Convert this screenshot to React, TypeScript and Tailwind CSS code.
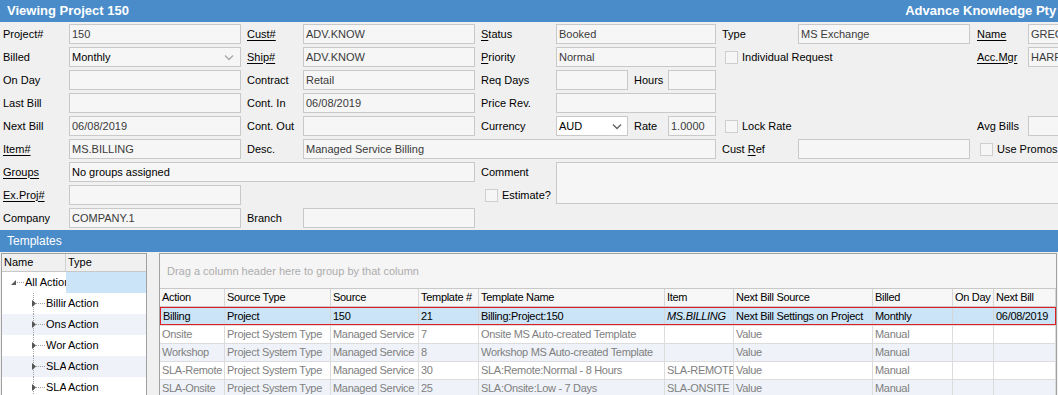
import React from 'react';

type Kids = { children?: React.ReactNode; className?: string };

const Box = ({ children, className = '' }: Kids) => (
  <div
    className={`h-[20px] border border-[#c9c9c9] bg-[#f6f6f6] pl-[2px] leading-[18px] text-[#3a3a3a] whitespace-nowrap overflow-hidden ${className}`}
  >
    {children}
  </div>
);

const Lbl = ({ children, className = '' }: Kids) => (
  <div className={`flex items-center whitespace-nowrap text-black ${className}`}>{children}</div>
);

const Chevron = ({ color = '#a8a8a8' }: { color?: string }) => (
  <svg width="10" height="7" viewBox="0 0 10 7" className="shrink-0">
    <path d="M1 1.5l4 4 4-4" fill="none" stroke={color} strokeWidth="1.3" />
  </svg>
);

const Check = ({ label, className = '' }: { label: string; className?: string }) => (
  <div className={`flex items-center gap-[4px] whitespace-nowrap ${className}`}>
    <span className="w-[13px] h-[13px] shrink-0 border border-[#cfcfcf] bg-[#f6f6f6]" />
    <span>{label}</span>
  </div>
);

const U = ({ children }: Kids) => <span className="underline underline-offset-2">{children}</span>;

const cols = [
  { name: 'Action', w: 'w-[65px]' },
  { name: 'Source Type', w: 'w-[106px]' },
  { name: 'Source', w: 'w-[88px]' },
  { name: 'Template #', w: 'w-[60px]' },
  { name: 'Template Name', w: 'w-[186px]' },
  { name: 'Item', w: 'w-[69px]' },
  { name: 'Next Bill Source', w: 'w-[139px]' },
  { name: 'Billed', w: 'w-[80px]' },
  { name: 'On Day', w: 'w-[41px]' },
  { name: 'Next Bill', w: 'w-[62px]' },
];

const rows = [
  ['Onsite', 'Project System Type', 'Managed Service', '7', 'Onsite MS Auto-created Template', '', 'Value', 'Manual', '', ''],
  ['Workshop', 'Project System Type', 'Managed Service', '8', 'Workshop MS Auto-created Template', '', 'Value', 'Manual', '', ''],
  ['SLA-Remote', 'Project System Type', 'Managed Service', '30', 'SLA:Remote:Normal - 8 Hours', 'SLA-REMOTE', 'Value', 'Manual', '', ''],
  ['SLA-Onsite', 'Project System Type', 'Managed Service', '25', 'SLA:Onsite:Low - 7 Days', 'SLA-ONSITE', 'Value', 'Manual', '', ''],
];

const selected = ['Billing', 'Project', '150', '21', 'Billing:Project:150', 'MS.BILLING', 'Next Bill Settings on Project', 'Monthly', '', '06/08/2019'];

const treeKids = ['Billing', 'Onsite', 'Workshop', 'SLA-Remote', 'SLA-Onsite'];

export default function App() {
  return (
    <div className="w-[1058px] h-[395px] overflow-hidden bg-[#f0f0f0] text-[11px] font-['Liberation_Sans',Arial,sans-serif]">
      {/* title */}
      <div className="h-[22px] bg-[#4a8cca] text-white font-bold text-[13px] flex items-center pl-[7px] overflow-hidden whitespace-nowrap">
        <span>Viewing Project 150</span>
        <span className="ml-auto mr-[-22px]">Advance Knowledge Pty Ltd</span>
      </div>

      {/* form */}
      <div className="grid grid-cols-[66px_172px_6px_56px_172px_6px_75px_72px_40px_48px_6px_76px_172px_7px_51px_1fr] auto-rows-[20px] gap-y-[3px] pl-[3px] pt-[2px]">
        {/* row 1 */}
        <Lbl className="row-start-1 col-start-1">Project#</Lbl>
        <Box className="row-start-1 col-start-2">150</Box>
        <Lbl className="row-start-1 col-start-4"><U>Cust#</U></Lbl>
        <Box className="row-start-1 col-start-5">ADV.KNOW</Box>
        <Lbl className="row-start-1 col-start-7"><U>S</U>tatus</Lbl>
        <Box className="row-start-1 col-start-8 col-span-3">Booked</Box>
        <Lbl className="row-start-1 col-start-12">Type</Lbl>
        <Box className="row-start-1 col-start-13">MS Exchange</Box>
        <Lbl className="row-start-1 col-start-15"><U>Name</U></Lbl>
        <Box className="row-start-1 col-start-16 w-[60px]">GREG</Box>

        {/* row 2 */}
        <Lbl className="row-start-2 col-start-1">Billed</Lbl>
        <Box className="row-start-2 col-start-2 flex items-center justify-between pr-[6px] !text-black">
          <span>Monthly</span>
          <Chevron />
        </Box>
        <Lbl className="row-start-2 col-start-4"><U>Ship#</U></Lbl>
        <Box className="row-start-2 col-start-5">ADV.KNOW</Box>
        <Lbl className="row-start-2 col-start-7"><U>P</U>riority</Lbl>
        <Box className="row-start-2 col-start-8 col-span-3">Normal</Box>
        <Check label="Individual Request" className="row-start-2 col-start-12 col-span-2 pl-[3px]" />
        <Lbl className="row-start-2 col-start-15"><U>Acc.Mgr</U></Lbl>
        <Box className="row-start-2 col-start-16 w-[60px]">HARR</Box>

        {/* row 3 */}
        <Lbl className="row-start-3 col-start-1">On Day</Lbl>
        <Box className="row-start-3 col-start-2" />
        <Lbl className="row-start-3 col-start-4">Contract</Lbl>
        <Box className="row-start-3 col-start-5">Retail</Box>
        <Lbl className="row-start-3 col-start-7">Req Days</Lbl>
        <Box className="row-start-3 col-start-8" />
        <Lbl className="row-start-3 col-start-9 pl-[6px]">Hours</Lbl>
        <Box className="row-start-3 col-start-10" />

        {/* row 4 */}
        <Lbl className="row-start-4 col-start-1">Last Bill</Lbl>
        <Box className="row-start-4 col-start-2" />
        <Lbl className="row-start-4 col-start-4">Cont. In</Lbl>
        <Box className="row-start-4 col-start-5">06/08/2019</Box>
        <Lbl className="row-start-4 col-start-7">Price Rev.</Lbl>
        <Box className="row-start-4 col-start-8 col-span-3" />

        {/* row 5 */}
        <Lbl className="row-start-5 col-start-1">Next Bill</Lbl>
        <Box className="row-start-5 col-start-2">06/08/2019</Box>
        <Lbl className="row-start-5 col-start-4">Cont. Out</Lbl>
        <Box className="row-start-5 col-start-5" />
        <Lbl className="row-start-5 col-start-7">Currency</Lbl>
        <Box className="row-start-5 col-start-8 flex items-center justify-between pr-[5px] !bg-white !text-black">
          <span>AUD</span>
          <Chevron color="#606060" />
        </Box>
        <Lbl className="row-start-5 col-start-9 pl-[6px]">Rate</Lbl>
        <Box className="row-start-5 col-start-10">1.0000</Box>
        <Check label="Lock Rate" className="row-start-5 col-start-12 col-span-2 pl-[3px]" />
        <Lbl className="row-start-5 col-start-15">Avg Bills</Lbl>
        <Box className="row-start-5 col-start-16 w-[60px]" />

        {/* row 6 */}
        <Lbl className="row-start-6 col-start-1"><U>Item#</U></Lbl>
        <Box className="row-start-6 col-start-2">MS.BILLING</Box>
        <Lbl className="row-start-6 col-start-4">Desc.</Lbl>
        <Box className="row-start-6 col-start-5 col-span-6">Managed Service Billing</Box>
        <Lbl className="row-start-6 col-start-12">Cust&nbsp;<U>R</U>ef</Lbl>
        <Box className="row-start-6 col-start-13" />
        <Check label="Use Promos" className="row-start-6 col-start-15 col-span-2 pl-[3px]" />

        {/* row 7 */}
        <Lbl className="row-start-7 col-start-1"><U>Groups</U></Lbl>
        <Box className="row-start-7 col-start-2 col-span-4 !text-black">No groups assigned</Box>
        <Lbl className="row-start-7 col-start-7">Comment</Lbl>
        <div className="row-start-7 row-span-2 col-start-8 col-span-9 h-[42px] w-[510px] border border-[#c9c9c9] bg-[#f6f6f6]" />

        {/* row 8 */}
        <Lbl className="row-start-8 col-start-1"><U>Ex.Proj#</U></Lbl>
        <Box className="row-start-8 col-start-2" />
        <Check label="Estimate?" className="row-start-8 col-start-7 col-span-2 pl-[4px]" />

        {/* row 9 */}
        <Lbl className="row-start-9 col-start-1">Company</Lbl>
        <Box className="row-start-9 col-start-2">COMPANY.1</Box>
        <Lbl className="row-start-9 col-start-4">Branch</Lbl>
        <Box className="row-start-9 col-start-5" />
      </div>

      {/* templates bar */}
      <div className="mt-[2px] h-[22px] bg-[#4a8cca] text-white text-[12px] flex items-center pl-[7px]">Templates</div>

      {/* lower area */}
      <div className="flex pt-[1px] h-[143px]">
        {/* tree */}
        <div className="ml-[1px] w-[146px] border-l border-t border-r border-[#a0a0a0] bg-white overflow-hidden">
          <div className="flex h-[18px] border-b border-[#c8c8c8] bg-[#f0f0f0]">
            <div className="w-[64px] border-r border-[#d0d0d0] pl-[2px] flex items-center">Name</div>
            <div className="flex-1 pl-[2px] flex items-center">Type</div>
          </div>
          <div className="flex h-[21px]">
            <div className="w-[64px] flex items-center overflow-hidden whitespace-nowrap">
              <svg width="23" height="21" viewBox="0 0 23 21" className="shrink-0">
                <path d="M14 8v5h-5z" fill="#5a5a5a" />
                <path d="M15 10.5h7" stroke="#9a9a9a" strokeDasharray="1 1" />
              </svg>
              <span>All Actions</span>
            </div>
            <div className="flex-1 bg-[#cce4f7]" />
          </div>
          {treeKids.map((k, i) => (
            <div key={k} className={`flex h-[21px] ${i % 2 === 1 ? 'bg-[#eff3f9]' : 'bg-white'}`}>
              <div className="w-[64px] flex items-center overflow-hidden whitespace-nowrap">
                <svg width="44" height="21" viewBox="0 0 44 21" className="shrink-0">
                  <path d="M31.5 0v21" stroke="#a0a0a0" strokeDasharray="1 1" />
                  <path d="M34 10.5h9" stroke="#a0a0a0" strokeDasharray="1 1" />
                  <path d="M30 7l4 3.5-4 3.5z" fill="#555" />
                </svg>
                <span>{k}</span>
              </div>
              <div className="flex-1 pl-[2px] flex items-center">Action</div>
            </div>
          ))}
        </div>

        {/* grid */}
        <div className="ml-[12px] w-[898px] border-l border-t border-r border-[#a0a0a0] bg-white overflow-hidden">
          <div className="h-[34px] bg-[#f5f5f5] pl-[7px] flex items-center text-[#adadad]">
            Drag a column header here to group by that column
          </div>
          <div className="flex h-[19px] border-y border-[#c8c8c8] bg-[#f7f7f7] tracking-[-0.3px]">
            {cols.map((c) => (
              <div key={c.name} className={`${c.w} shrink-0 border-r border-[#d6d6d6] pl-[2px] flex items-center whitespace-nowrap overflow-hidden`}>
                {c.name}
              </div>
            ))}
          </div>
          <div className="flex h-[18px] bg-[#cce4f7] text-black tracking-[-0.3px] outline outline-1 -outline-offset-1 outline-[#e02020]">
            {selected.map((v, i) => (
              <div
                key={i}
                className={`${cols[i].w} shrink-0 border-r border-[#d6d6d6] pl-[2px] flex items-center whitespace-nowrap overflow-hidden ${i === 5 ? 'italic' : ''} ${i === 0 ? 'border-l border-l-[#333] border-dotted' : ''}`}
              >
                {v}
              </div>
            ))}
          </div>
          {rows.map((r, ri) => (
            <div key={ri} className={`flex h-[18px] border-t border-[#dcdcdc] text-[#808080] tracking-[-0.3px] ${ri % 2 === 1 ? 'bg-[#eff3f9]' : 'bg-white'}`}>
              {r.map((v, i) => (
                <div key={i} className={`${cols[i].w} shrink-0 border-r border-[#dcdcdc] pl-[2px] flex items-center whitespace-nowrap overflow-hidden`}>
                  {v}
                </div>
              ))}
            </div>
          ))}
        </div>
      </div>
    </div>
  );
}
